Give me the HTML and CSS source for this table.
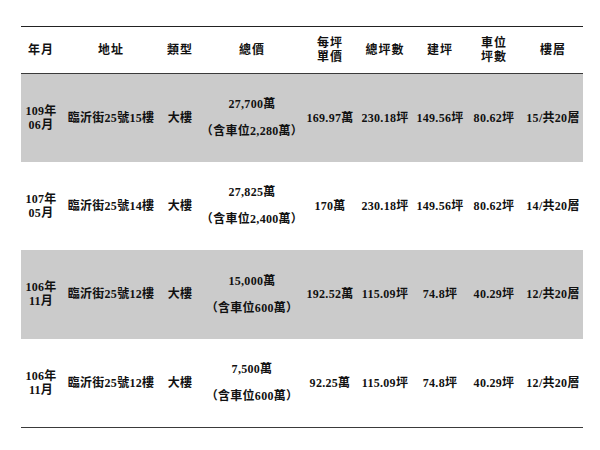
FILE: index.html
```html
<!DOCTYPE html>
<html lang="zh-Hant">
<head>
<meta charset="utf-8">
<title>臨沂街25號 實價登錄</title>
<link rel="stylesheet" href="styles.css">
</head>
<body>
<div class="page">
<table class="deals">
  <colgroup>
    <col class="c-date"><col class="c-addr"><col class="c-type"><col class="c-price">
    <col class="c-unit"><col class="c-total"><col class="c-build"><col class="c-park"><col class="c-floor">
  </colgroup>
  <thead>
    <tr>
      <th>年月</th><th>地址</th><th>類型</th><th>總價</th>
      <th>每坪<br>單價</th><th>總坪數</th><th>建坪</th><th>車位<br>坪數</th><th>樓層</th>
    </tr>
  </thead>
  <tbody>
    <tr class="shade">
      <td>109年<br>06月</td><td>臨沂街25號15樓</td><td>大樓</td>
      <td><div class="p-main">27,700萬</div><div class="p-sub">（含車位2,280萬）</div></td>
      <td>169.97萬</td><td>230.18坪</td><td>149.56坪</td><td>80.62坪</td><td>15/共20層</td>
    </tr>
    <tr>
      <td>107年<br>05月</td><td>臨沂街25號14樓</td><td>大樓</td>
      <td><div class="p-main">27,825萬</div><div class="p-sub">（含車位2,400萬）</div></td>
      <td>170萬</td><td>230.18坪</td><td>149.56坪</td><td>80.62坪</td><td>14/共20層</td>
    </tr>
    <tr class="shade">
      <td>106年<br>11月</td><td>臨沂街25號12樓</td><td>大樓</td>
      <td><div class="p-main">15,000萬</div><div class="p-sub">（含車位600萬）</div></td>
      <td>192.52萬</td><td>115.09坪</td><td>74.8坪</td><td>40.29坪</td><td>12/共20層</td>
    </tr>
    <tr>
      <td>106年<br>11月</td><td>臨沂街25號12樓</td><td>大樓</td>
      <td><div class="p-main">7,500萬</div><div class="p-sub">（含車位600萬）</div></td>
      <td>92.25萬</td><td>115.09坪</td><td>74.8坪</td><td>40.29坪</td><td>12/共20層</td>
    </tr>
  </tbody>
</table>
</div>
</body>
</html>
```
FILE: styles.css
```css
html, body {
  margin: 0;
  padding: 0;
  background: #ffffff;
}

.page {
  padding: 26px 0 0 21px;
}

.deals {
  width: 562px;
  table-layout: fixed;
  border-collapse: collapse;
  font-family: "Liberation Serif", "Noto Sans CJK TC", serif;
  font-size: 12px;
  font-weight: 700;
  color: #111111;
  line-height: 14px;
}

.c-date { width: 40px; }
.c-addr { width: 100px; }
.c-type { width: 38px; }
.c-price { width: 106px; }
.c-unit { width: 50px; }
.c-total { width: 60px; }
.c-build { width: 50px; }
.c-park { width: 58px; }
.c-floor { width: 60px; }

.deals th,
.deals td {
  padding: 0;
  text-align: center;
  vertical-align: middle;
  white-space: nowrap;
}

.deals td {
  letter-spacing: 0.3px;
}

.deals thead tr {
  height: 47px;
  border-top: 1px solid #222222;
  border-bottom: 1px solid #3a3a3a;
}

.deals th {
  font-weight: 700;
  letter-spacing: 1px;
}

.deals tbody tr {
  height: 88px;
}

.deals tbody tr:nth-child(n+3) {
  height: 89px;
}

.deals tbody tr:last-child {
  border-bottom: 1px solid #3a3a3a;
}

.deals tr.shade {
  background: #cbcbcb;
}

.p-main {
  margin-bottom: 13px;
}
```
